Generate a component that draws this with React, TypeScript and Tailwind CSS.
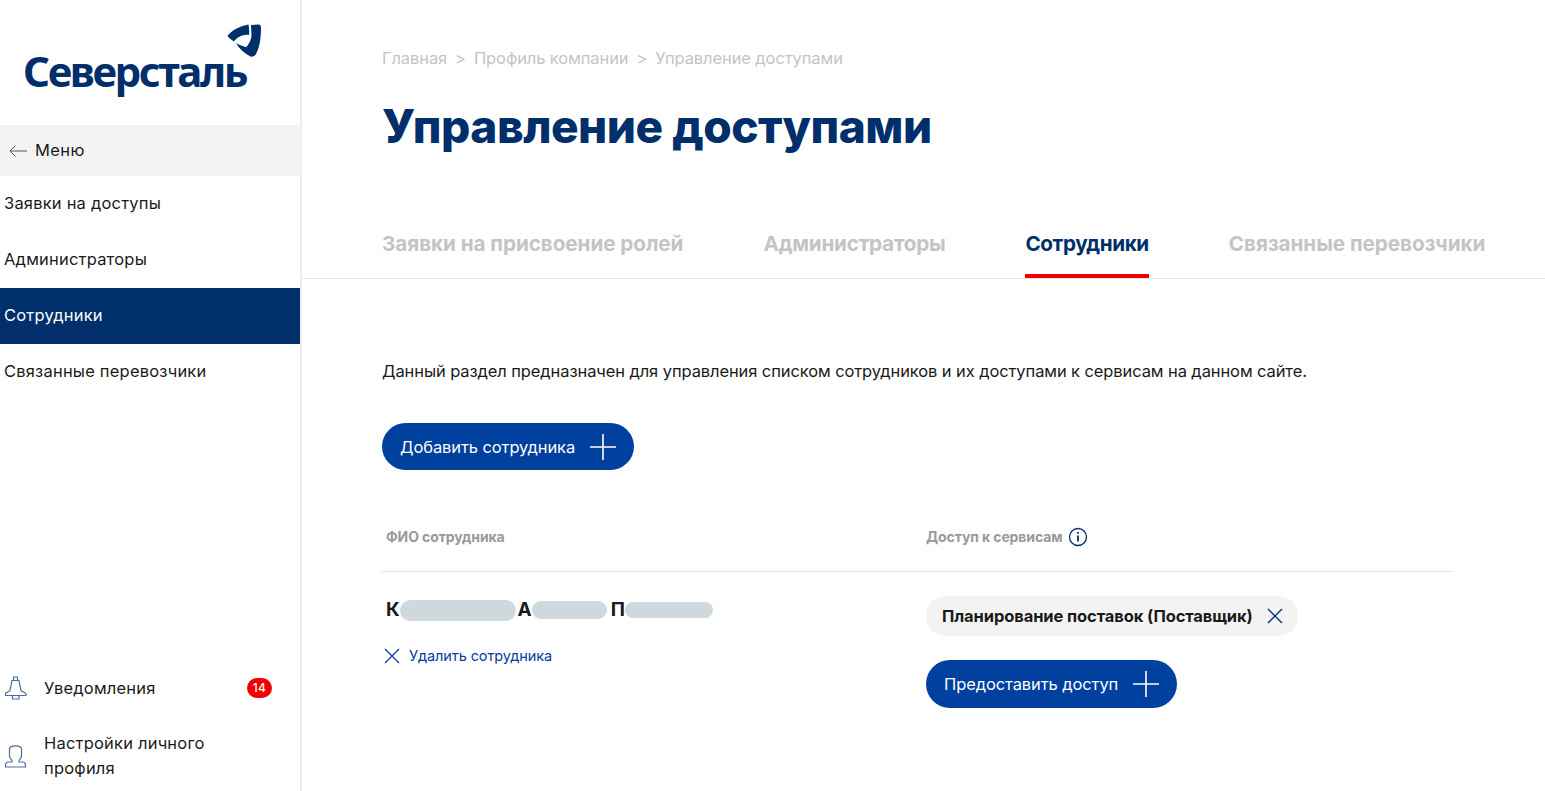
const menuItems = [
  { label: "Заявки на доступы" },
  { label: "Администраторы" },
  { label: "Сотрудники", active: true },
  { label: "Связанные перевозчики" },
];

const tabs = [
  { label: "Заявки на присвоение ролей", spacing: "tracking-[-0.06px]" },
  { label: "Администраторы", spacing: "tracking-[-0.24px]" },
  { label: "Сотрудники", active: true, spacing: "tracking-[-0.4px]" },
  { label: "Связанные перевозчики", spacing: "tracking-[-0.05px]" },
];

const LogoMark = () => (
  <svg width="34" height="34" viewBox="0 0 34 34" className="absolute left-[227px] top-[24px]">
    <path fill="#002f6c" d="M0.5 12 C5 6 12 2.5 21.5 0.5 C22 4 22.5 8 22 11 C18 10.5 15 11.5 12 13 C10 14 8.5 15.5 7 17.5 C4.5 16 2 14 0.5 12 Z" />
    <path fill="#002f6c" d="M24 1 L31.5 0.5 Q34 0.5 34 3.5 C34 13 33 22 29.5 29 Q27.5 33.5 23.5 32.5 C17 29 12 24.5 9 19 C12.5 21 16 22.5 19.5 23 C22.5 19 24.5 15 24.5 11 Z" />
  </svg>
);

const BellIcon = () => (
  <svg width="22" height="24" viewBox="0 0 22 24" fill="none" stroke="#4a6c9b" strokeWidth="1.2">
    <path d="M8.5 4.5 V1 H12.5 V4.5 M7 4.5 H14 L16 14.5 L21 17.5 V19.5 H0.5 V17.5 L5 14.5 Z M7.5 19.5 V23 H14 V19.5" />
  </svg>
);

const ProfileIcon = () => (
  <svg width="22" height="23" viewBox="0 0 22 23" fill="none" stroke="#4a6c9b" strokeWidth="1.2">
    <path d="M4.5 4 C4.5 1.5 6.5 0.8 10.5 0.8 C14.5 0.8 16.5 1.5 16.5 4 V11 C16.5 13.5 14 14.5 14 16 V17 H17.5 C19.5 17 20.5 18.5 20.5 20 V22 H0.5 V20 C0.5 18.5 1.5 17 3.5 17 H7 V16 C7 14.5 4.5 13.5 4.5 11 Z" />
  </svg>
);

const InfoIcon = () => (
  <svg width="20" height="20" viewBox="0 0 20 20" fill="none" stroke="#002f6c">
    <circle cx="10" cy="10" r="8.5" strokeWidth="1.3" />
    <path d="M10 8.5 V14.5" strokeWidth="1.8" />
    <path d="M10 5 V6.8" strokeWidth="1.8" />
  </svg>
);

const PlusIcon = () => (
  <svg width="28" height="28" viewBox="0 0 28 28" stroke="currentColor" strokeWidth="1.6">
    <path d="M14 1 V27 M1 14 H27" />
  </svg>
);

const CloseIcon = ({ className }: { className: string }) => (
  <svg width="16" height="16" viewBox="0 0 16 16" stroke="currentColor" strokeWidth="1.3" className={className}>
    <path d="M1 1 L15 15 M15 1 L1 15" />
  </svg>
);

const BackArrow = () => (
  <svg width="18" height="12" viewBox="0 0 18 12" fill="none" stroke="#555555" strokeWidth="1">
    <path d="M18 6 H1 M6.5 0.5 L1 6 L6.5 11.5" />
  </svg>
);

const Blur = ({ className }: { className: string }) => (
  <span className={`inline-block rounded-full bg-[#cfd8dd] ${className}`} />
);

const Sidebar = () => (
  <aside className="flex h-full w-[302px] shrink-0 flex-col border-r-2 border-[#eeeeee] tracking-[0.2px]">
    <div className="relative h-[125px] shrink-0">
      <span className="absolute left-[23px] top-[41px] font-['Noto_Sans'] text-[42px] font-bold leading-[60px] tracking-[-2.4px] text-[#002f6c]">
        Северсталь
      </span>
      <LogoMark />
    </div>
    <div className="flex h-[51px] items-center gap-[8px] bg-[#f3f3f3] pl-[9px] text-[#1a1a1a]">
      <BackArrow />
      <span className="text-[16.5px] tracking-[0.4px]">Меню</span>
    </div>
    <nav className="flex flex-col">
      {menuItems.map((item) => (
        <a
          key={item.label}
          className={`flex h-[56px] items-center pb-[2px] pl-[4px] text-[16.5px] ${
            item.active ? "bg-[#002f6c] text-white" : "text-[#1a1a1a]"
          }`}
        >
          {item.label}
        </a>
      ))}
    </nav>
    <div className="mt-auto flex flex-col">
      <div className="flex h-[56px] items-center pl-[5px] pr-[28px] text-[16.5px] text-[#1a1a1a]">
        <BellIcon />
        <span className="ml-[17px]">Уведомления</span>
        <span className="ml-auto flex h-[20px] w-[25px] items-center justify-center rounded-full bg-[#f00000] text-[12px] font-medium text-white">
          14
        </span>
      </div>
      <div className="mt-[15px] flex items-center pb-[10px] pl-[5px] text-[16.5px] leading-[25px] text-[#1a1a1a]">
        <ProfileIcon />
        <span className="ml-[17px] w-[190px]">Настройки личного профиля</span>
      </div>
    </div>
  </aside>
);

export default function App() {
  return (
    <div className="flex h-[791px] w-[1545px] overflow-hidden bg-white font-['Inter',sans-serif] tracking-[-0.1px]">
      <Sidebar />
      <main className="flex min-w-0 flex-1 flex-col">
        <div className="flex h-[279px] shrink-0 flex-col border-b border-[#e5e5e5] pl-[80px]">
          <div className="mt-[47px] flex h-[22px] items-center gap-[8px] text-[16.5px] text-[#c4c4c4]">
            <span>Главная</span>
            <span>&gt;</span>
            <span>Профиль компании</span>
            <span>&gt;</span>
            <span>Управление доступами</span>
          </div>
          <h1 className="mt-[27px] text-[46px] font-extrabold leading-[60px] tracking-[-0.5px] text-[#002f6c]">
            Управление доступами
          </h1>
          <div className="mt-auto flex gap-[80px]">
            {tabs.map((tab) => (
              <div
                key={tab.label}
                className={`flex h-[50px] items-center border-b-[4px] pb-[14px] text-[20.7px] font-bold ${tab.spacing} ${
                  tab.active ? "border-[#f00000] text-[#002f6c]" : "border-transparent text-[#c4c4c4]"
                }`}
              >
                {tab.label}
              </div>
            ))}
          </div>
        </div>

        <div className="flex flex-col pl-[80px] pr-[92px]">
          <p className="mt-[81px] text-[16.5px] leading-[22px] text-[#1a1a1a]">
            Данный раздел предназначен для управления списком сотрудников и их доступами к сервисам на данном сайте.
          </p>
          <button className="mt-[41px] flex h-[47px] w-[252px] items-center justify-between rounded-full bg-[#00409e] pl-[18px] pr-[17px] pt-[1px] text-[16.5px] text-white">
            Добавить сотрудника
            <PlusIcon />
          </button>

          <div className="mt-[44px] flex h-[58px] items-start border-b border-[#e2e2e2] pt-[12px] text-[14px] font-bold text-[#999999]">
            <div className="w-[544px] pl-[4px]">ФИО сотрудника</div>
            <div className="flex items-center gap-[5px]">
              Доступ к сервисам
              <InfoIcon />
            </div>
          </div>

          <div className="flex pt-[24px]">
            <div className="w-[544px] pl-[4px]">
              <div className="flex h-[28px] items-center text-[19px] font-bold text-[#1a1a1a]">
                К<Blur className="h-[21px] w-[116px]" />
                <span className="ml-[2px]">А</span>
                <Blur className="h-[18px] w-[75px]" />
                <span className="ml-[4px]">П</span>
                <Blur className="h-[16px] w-[88px]" />
              </div>
              <div className="mt-[21px] flex items-center gap-[9px] text-[14.5px] text-[#00409e]">
                <CloseIcon className="-ml-[2px]" />
                Удалить сотрудника
              </div>
            </div>
            <div className="flex flex-col items-start">
              <div className="flex h-[40px] items-center gap-[14px] rounded-full bg-[#f3f3f3] pl-[16px] pr-[15px] text-[16.5px] font-bold text-[#1a1a1a]">
                Планирование поставок (Поставщик)
                <CloseIcon className="text-[#002f6c]" />
              </div>
              <button className="mt-[24px] flex h-[48px] w-[251px] items-center justify-between rounded-full bg-[#00409e] pl-[18px] pr-[17px] text-[16.5px] text-white">
                Предоставить доступ
                <PlusIcon />
              </button>
            </div>
          </div>
        </div>
      </main>
    </div>
  );
}
